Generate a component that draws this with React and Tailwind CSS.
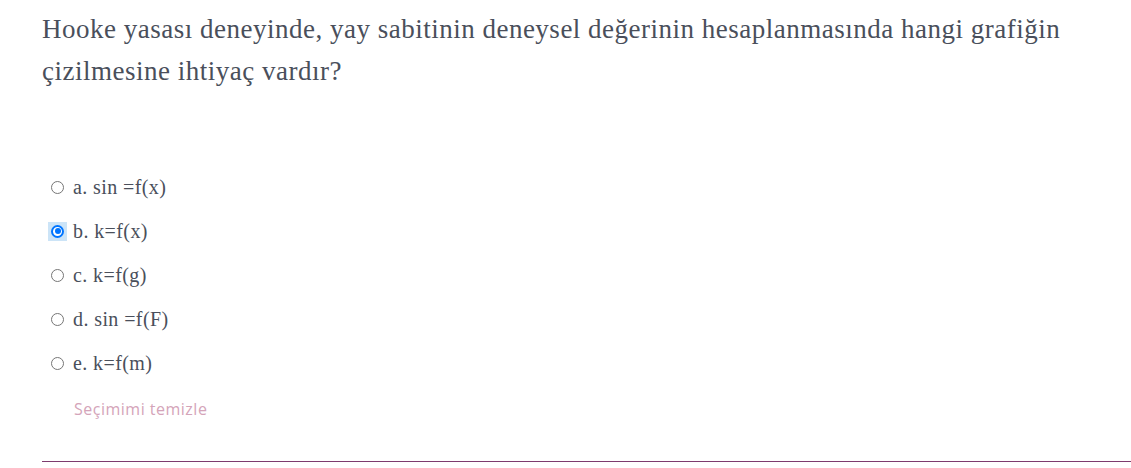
export default function App() {
  const options = [
    { l: "a.", t: "sin =f(x)" },
    { l: "b.", t: "k=f(x)", checked: true },
    { l: "c.", t: "k=f(g)" },
    { l: "d.", t: "sin =f(F)" },
    { l: "e.", t: "k=f(m)" },
  ];
  return (
    <div className="w-[1131px] h-[468px] bg-white overflow-hidden">
      <div className="pl-[42px] pt-[8px]">
        <p
          className="text-[27px] leading-[42px] tracking-[0.5px] text-[#4a4f5b] w-[1070px]"
          style={{ fontFamily: '"Liberation Serif", serif' }}
        >
          Hooke yasası deneyinde, yay sabitinin deneysel değerinin hesaplanmasında hangi grafiğin çizilmesine ihtiyaç vardır?
        </p>
        <div className="mt-[73px] flex flex-col">
          {options.map((o) => (
            <div key={o.l} className="h-[44px] flex items-center">
              <div className="w-[31px] flex items-center">
                {o.checked ? (
                  <span className="ml-[6px] w-[19px] h-[19px] bg-[#cce4f7] flex items-center justify-center">
                    <span className="w-[13px] h-[13px] rounded-full border-2 border-[#0075ff] bg-white flex items-center justify-center">
                      <span className="w-[6px] h-[6px] rounded-full bg-[#0075ff]"></span>
                    </span>
                  </span>
                ) : (
                  <span className="ml-[9px] w-[13px] h-[13px] rounded-full border border-[#767676] bg-white"></span>
                )}
              </div>
              <span
                className="text-[20px] tracking-[0.4px] text-[#4a4f5b]"
                style={{ fontFamily: '"Liberation Serif", serif' }}
              >
                {o.l} {o.t}
              </span>
            </div>
          ))}
        </div>
        <div
          className="mt-[12px] ml-[32px] text-[16px] leading-[24px] tracking-[0.5px] text-[#d4a4b9]"
          style={{ fontFamily: '"Open Sans", sans-serif' }}
        >
          Seçimimi temizle
        </div>
        <div className="mt-[40px] h-px bg-[#7d3c6e]"></div>
      </div>
    </div>
  );
}
